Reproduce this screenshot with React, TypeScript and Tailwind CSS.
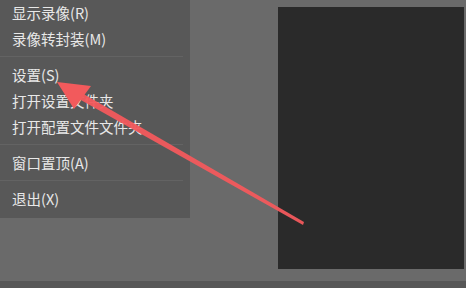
import React from 'react';

type Item = { label: string } | { sep: true };

const items: Item[] = [
  { label: '显示录像(R)' },
  { label: '录像转封装(M)' },
  { sep: true },
  { label: '设置(S)' },
  { label: '打开设置文件夹' },
  { label: '打开配置文件文件夹' },
  { sep: true },
  { label: '窗口置顶(A)' },
  { sep: true },
  { label: '退出(X)' },
];

const Arrow: React.FC = () => (
  <svg className="absolute left-0 top-0 pointer-events-none" width="466" height="288" viewBox="0 0 466 288">
    <defs>
      <filter id="soft" x="-10%" y="-10%" width="120%" height="120%">
        <feGaussianBlur stdDeviation="0.6" />
      </filter>
    </defs>
    <g filter="url(#soft)" fill="#f25a5c">
      {/* shaft, thick near the head and thin at the tail */}
      <polygon points="75,89 79,99 303,225 304,222" opacity="0.95" />
      {/* head */}
      <polygon points="57,82 91,86 74,109" />
    </g>
  </svg>
);

export default function App() {
  return (
    <div
      className="relative w-[466px] h-[288px] overflow-hidden bg-[#6a6a6a] flex flex-col"
      style={{ fontFamily: '"Noto Sans CJK SC", "Liberation Sans", sans-serif' }}
    >
      <div className="flex flex-1 min-h-0">
        <div className="w-[190px] h-[218px] bg-[#585858] flex flex-col">
          {items.map((it, i) =>
            'sep' in it ? (
              <div key={i} className="pt-[4px] pb-[5px] pr-[7px]">
                <div className="h-px bg-[#4a4a4a] border-b border-[#636363]" />
              </div>
            ) : (
              <div key={i} className="h-[26px] flex items-center pl-3 text-[14.5px] leading-none text-[#e8e8e8]">
                {it.label}
              </div>
            )
          )}
        </div>
        <div className="flex-1 pt-[7px] pb-[12px] pl-[88px] pr-[2px]">
          <div className="w-full h-full bg-[#2a2a2a]" />
        </div>
      </div>
      <div className="h-[7px] bg-[#575757]" />
      <Arrow />
    </div>
  );
}
